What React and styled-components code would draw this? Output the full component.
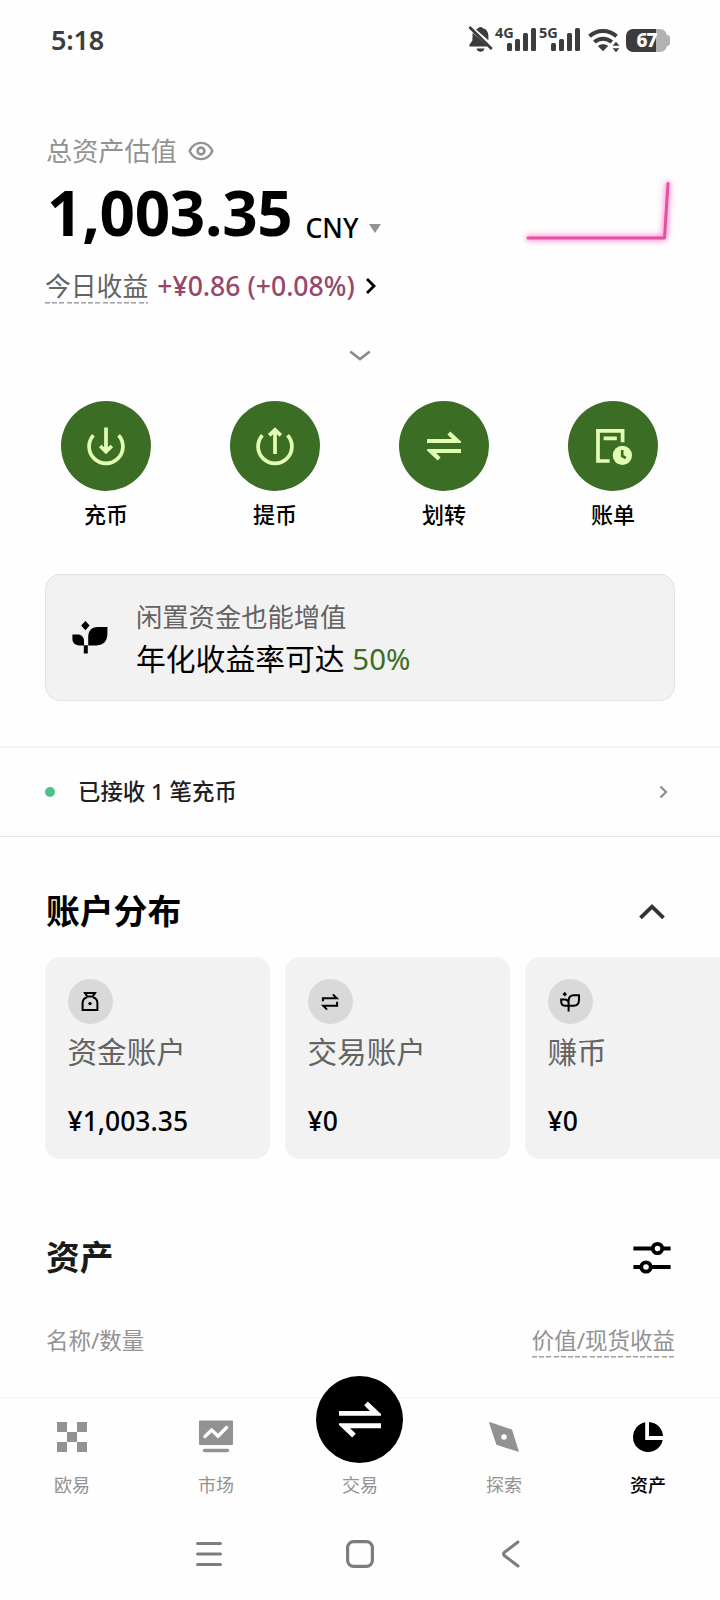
import React from 'react';
import styled, { createGlobalStyle } from 'styled-components';

const GlobalStyle = createGlobalStyle`
* { box-sizing: border-box; }
body {
  margin: 0;
  background: #fefefe;
  color: #000;
  font-family: "Noto Sans", "Noto Sans CJK SC", sans-serif;
}
svg { display: block; flex: none; }
`

const Screen = styled.div`
width: 720px;
height: 1600px;
overflow: hidden;
display: flex;
flex-direction: column;
background: #fefefe;`

/* status bar */

const StatusBar = styled.div`
display: flex;
justify-content: space-between;
align-items: center;
height: 80px;
padding: 0 50px 0 51px;
color: #3c3c3c;`

const Clock = styled.span`
font-size: 27px;
font-weight: 600;
line-height: 40px;
letter-spacing: -0.2px;`

const StatusIcons = styled.div`
display: flex;
align-items: center;
height: 28px;`

const Signal = styled.div`
position: relative;
width: 44px;
height: 28px;`

const SignalType = styled.span`
position: absolute;
left: -1px;
top: -1px;
font-size: 14.5px;
line-height: 14px;
font-weight: 700;`

const Battery = styled.div`
display: flex;
align-items: center;
margin-left: 6px;`

const BatteryBody = styled.div`
display: flex;
align-items: center;
justify-content: center;
width: 41px;
height: 23px;
border-radius: 7px;
background: linear-gradient(90deg, #3c3c3c 30px, #b2b2b2 30px);
color: #fff;
font-size: 19px;
line-height: 23px;
font-weight: 800;
letter-spacing: -1px;`

const BatteryTip = styled.div`
width: 3px;
height: 11px;
border-radius: 0 4px 4px 0;
background: #b2b2b2;`

/* balance */

const Balance = styled.section`
display: flex;
justify-content: space-between;
height: 180px;
margin-top: 54px;
padding: 0 45px;`

const BalanceInfo = styled.div`
display: flex;
flex-direction: column;`

const BalanceLabel = styled.div`
display: flex;
align-items: center;
gap: 11px;
height: 34px;
padding-left: 1px;
color: #929292;
font-size: 26.2px;
line-height: 34px;
font-weight: 400;`

const AmountRow = styled.div`
display: flex;
align-items: baseline;
height: 90px;
padding-left: 2px;
line-height: 88px;`

const Amount = styled.span`
font-size: 62px;
font-weight: 700;
letter-spacing: -0.3px;`

const Currency = styled.span`
margin-left: 13px;
font-size: 26.5px;
font-weight: 500;
transform: translateY(2px);`

const Caret = styled.i`
margin-left: 11px;
border: 6px solid transparent;
border-top: 9px solid #929292;
border-bottom: 0;
transform: translateY(-3px);`

const PnlRow = styled.div`
display: flex;
align-items: center;
height: 56px;
font-size: 25.8px;
line-height: 36px;`

const Dashed = styled.span`
color: ${p => p.color};
background: repeating-linear-gradient(90deg, #a4a4a4 0 5px, transparent 5px 7.2px) bottom / 100% 1.6px no-repeat;
padding-bottom: ${p => p.$pad || 0}px;
margin-bottom: -${p => p.$pad || 0}px;`

const PnlValue = styled.span`
margin: 0 10px 0 9px;
color: #96476a;
font-size: 26.6px;
font-weight: 500;`

const Trend = styled.svg`
margin-top: 36px;
overflow: visible;
filter: drop-shadow(0 0 2px #ff8fd6) drop-shadow(0 0 3px #ff9ddb);`

const Expand = styled.div`
display: flex;
justify-content: center;
align-items: center;
height: 84px;`

/* quick actions */

const Actions = styled.div`
display: flex;
gap: 79px;
margin-top: 3px;
padding-left: 61px;`

const Action = styled.div`
display: flex;
flex-direction: column;
align-items: center;
width: 90px;`

const ActionIcon = styled.div`
display: flex;
align-items: center;
justify-content: center;
width: 90px;
height: 90px;
border-radius: 50%;
background: #3c6d25;`

const ActionLabel = styled.span`
margin-top: 8px;
font-size: 22px;
line-height: 30px;
font-weight: 500;`

/* promo */

const Promo = styled.div`
display: flex;
align-items: center;
height: 127px;
margin: 45px 45px 0;
padding-left: 25px;
border: 1px solid #e2e2e2;
border-radius: 15px;
background: #f2f2f2;`

const PromoText = styled.div`
display: flex;
flex-direction: column;
margin-left: 27px;`

const PromoHint = styled.span`
font-size: 26.3px;
line-height: 42px;
color: #636363;`

const PromoTitle = styled.span`
font-size: 29.8px;
line-height: 42px;

em {
  font-style: normal;
  font-size: 29.4px;
  color: #3c6d25;
}`

/* notice */

const Notice = styled.div`
display: flex;
align-items: center;
height: 91px;
margin-top: 45px;
padding: 0 50px 0 45px;
border-top: 2px solid #f4f4f4;
border-bottom: 1px solid #e4e4e4;
color: #1f1f1f;
font-size: 22.4px;
font-weight: 500;`

const Dot = styled.i`
width: 10px;
height: 10px;
margin-right: 23px;
border-radius: 50%;
background: #4fbf8b;`

const NoticeText = styled.span`
flex: 1;
line-height: 32px;`

/* sections */

const SectionHeader = styled.div`
display: flex;
justify-content: space-between;
align-items: center;
height: 80px;
margin-top: ${p => p.$top}px;
padding: 0 ${p => p.$right}px 0 46px;`

const SectionTitle = styled.h2`
margin: 0;
font-size: 33.8px;
line-height: 48px;
font-weight: 700;
color: ${p => p.color || '#000'};`

const Accounts = styled.div`
display: flex;
gap: 15px;
margin-top: 6px;
padding-left: 45px;`

const Account = styled.div`
display: flex;
flex-direction: column;
flex: none;
width: 225px;
height: 202px;
padding: 22px 0 0 22.5px;
border-radius: 15px;
background: #f2f2f2;`

const AccountIcon = styled.div`
display: flex;
align-items: center;
justify-content: center;
flex: none;
width: 45px;
height: 45px;
border-radius: 50%;
background: #d9d9d9;`

const AccountName = styled.span`
margin-top: 8px;
font-size: 29.6px;
line-height: 40px;
color: #636363;`

const AccountValue = styled.span`
margin-top: 30px;
font-size: 26.5px;
line-height: 38px;
font-weight: 500;`

const Columns = styled.div`
display: flex;
justify-content: space-between;
align-items: center;
height: 40px;
margin-top: 24px;
padding: 0 45px 0 46px;
color: #929292;
font-size: 22.5px;
line-height: 30px;`

/* bottom bars */

const TabBar = styled.nav`
display: flex;
height: 110px;
margin-top: 36px;
border-top: 2px solid #f8f8f8;`

const Tab = styled.div`
position: relative;
display: flex;
flex-direction: column;
align-items: center;
width: 144px;
padding-top: 21px;
color: ${p => (p.$active ? '#000' : '#929292')};`

const TabIcon = styled.div`
display: flex;
align-items: center;
justify-content: center;
height: 34px;`

const TabLabel = styled.span`
margin-top: 17px;
font-size: 18px;
line-height: 28px;
font-weight: ${p => (p.$active ? 500 : 400)};`

const TradeButton = styled.div`
position: absolute;
top: -23px;
left: 28px;
display: flex;
align-items: center;
justify-content: center;
width: 87px;
height: 87px;
border-radius: 50%;
background: #000;`

const SystemNav = styled.div`
display: flex;
justify-content: center;
align-items: center;
gap: 124px;
height: 93px;`

function Bars() {
  return (
    <svg width="44" height="28" fill="#3c3c3c">
      <rect x="11" y="17" width="5" height="8" rx="1.5" />
      <rect x="19" y="13" width="5" height="12" rx="1.5" />
      <rect x="27" y="7" width="5" height="18" rx="1.5" />
      <rect x="35" y="2" width="5" height="23" rx="1.5" />
    </svg>
  )
}

function BellOff() {
  return (
    <svg width="28" height="28" viewBox="0 0 28 28" fill="#3c3c3c">
      <path d="M10 2.300a3 3 0 0 1 5 0c3.600 1 5.400 4 5.400 7.400v4.600L8 3.600zM4.600 6.800 20 20.600H1.400v-1.800l3-4.200zM8.500 22.600h8c-.8 4.300-7.200 4.300-8 0z" />
      <path d="m1.400 1 22.400 22" stroke="#3c3c3c" strokeWidth="2.800" />
    </svg>
  )
}

function Wifi() {
  return (
    <svg width="32" height="28" viewBox="0 0 32 28" fill="none" stroke="#3c3c3c" strokeWidth="4">
      <path d="M1.500 10.300a20 20 0 0 1 27 0M6.400 16a13 13 0 0 1 17.400 0" />
      <path d="m15 25.300-5.200-5.200c3-2.400 7.400-2.400 10.400 0z" fill="#3c3c3c" stroke="none" />
      <path d="m28 15.800 3.400 4h-6.800zm0 10.400 3.400-4h-6.800z" fill="#3c3c3c" stroke="none" />
    </svg>
  )
}

function Eye() {
  return (
    <svg width="26" height="20" viewBox="0 0 26 20" fill="none" stroke="#929292" strokeWidth="2.400">
      <path d="M1.600 10C4 4.900 8 1.900 13 1.900S22 4.900 24.400 10C22 15.100 18 18.100 13 18.100S4 15.100 1.600 10z" />
      <circle cx="13" cy="10" r="3.400" strokeWidth="2.600" />
    </svg>
  )
}

function Transfer({ width, color }) {
  return (
    <svg width={width} viewBox="0 0 34 30" fill={color}>
      <path d="M0 8h25l-4.600-4.600L23.300.4 34 10.500V12H0zM34 22H9l4.600 4.600-2.900 3L0 19.500V18h34z" />
    </svg>
  )
}

function Deposit({ up }) {
  return (
    <svg width="44" height="44" viewBox="0 0 44 44" fill="none" stroke="#e3ffb2" strokeWidth="3.700">
      <path d="M9.400 11.200a16.900 16.900 0 1 0 25.200 0" />
      <path d={up ? 'M22 30V6M16.200 11.400 22 5.800l5.800 5.600' : 'M22 3.400v24M16.200 22 22 27.600l5.800-5.600'} />
    </svg>
  )
}

function Bill() {
  return (
    <svg width="44" height="44" viewBox="0 0 44 44" fill="none" stroke="#e3ffb2" strokeWidth="3.700">
      <path d="M18.600 37H7V6.800h24.600v11.400M12.600 14.400h13.200" />
      <circle cx="31.400" cy="31.400" r="9.600" fill="#e3ffb2" stroke="none" />
      <path d="M31.200 26v6l3.600 2" stroke="#3c6d25" strokeWidth="2.600" />
    </svg>
  )
}

function Sprout() {
  return (
    <svg width="38" height="38" viewBox="0 0 38 38">
      <path d="m14.400 2 4.200 4.600-4.200 4.600-4.200-4.600zM1.400 15.600h5.200c3.800 0 6.400 2.400 6.400 6.600v4.200H8.400c-4.400 0-7-2.400-7-6.800zM17.200 26.400v-8c0-6.400 3.200-10.400 9.600-10.400h9.600v6.600c0 7.600-3.800 11.800-10.800 11.800zM12.800 26.200h4v8.400h-4z" />
    </svg>
  )
}

function MoneyBag() {
  return (
    <svg width="22" height="22" viewBox="0 0 22 22" fill="none" stroke="#000" strokeWidth="2">
      <path d="M6 2h10l-2.200 3.400H8.200zM8 6.200c-3.200.9-4.400 3.200-4.400 6V19h14.800v-6.800c0-2.800-1.200-5.100-4.400-6" />
      <circle cx="11" cy="12.600" r="1.700" fill="#000" stroke="none" />
    </svg>
  )
}

function Swap() {
  return (
    <svg width="20" height="20" viewBox="0 0 22 22" fill="none" stroke="#000" strokeWidth="2.200">
      <path d="M3.200 10.200V6.800h15.200l-4.200-4.200M18.800 10.600v4.600H3.600l4.200 4.200" />
    </svg>
  )
}

function SproutLine() {
  return (
    <svg width="22" height="22" viewBox="0 0 22 22" fill="none" stroke="#000" strokeWidth="2">
      <path d="M9.600 20.400V10c0-4 2-5.800 5.200-5.800H20v4.600c0 4-2 6-5.400 6H6.400c-2.800 0-4.200-1.400-4.200-4.200V8.600h3.200c2.400 0 4.200 1.200 4.200 3.600" />
      <path d="m5.800.8 2.200 2.400-2.200 2.400-2.200-2.400z" fill="#000" stroke="none" />
    </svg>
  )
}

function Sliders() {
  return (
    <svg width="38" height="34" viewBox="0 0 38 34" fill="none" stroke="#000" strokeWidth="3.800">
      <path d="M.4 8.500h19M29 8.500h8.600M.4 27h8.200M18 27h19.600" />
      <circle cx="24.500" cy="8.500" r="4.700" />
      <circle cx="13" cy="27" r="4.700" />
    </svg>
  )
}

const actions = [
  { label: '充币', icon: <Deposit /> },
  { label: '提币', icon: <Deposit up /> },
  { label: '划转', icon: <Transfer width={34} color="#e3ffb2" /> },
  { label: '账单', icon: <Bill /> },
]

const accounts = [
  { name: '资金账户', value: '¥1,003.35', icon: <MoneyBag /> },
  { name: '交易账户', value: '¥0', icon: <Swap /> },
  { name: '赚币', value: '¥0', icon: <SproutLine /> },
]

const tabs = [
  {
    label: '欧易',
    icon: (
      <svg width="30" height="30" fill="#929292">
        <path d="M0 0h10v10H0zM20 0h10v10H20zM10 10h10v10H10zM0 20h10v10H0zM20 20h10v10H20z" />
      </svg>
    ),
  },
  {
    label: '市场',
    icon: (
      <svg width="34" height="34" fill="none" stroke="#929292">
        <rect x="0" y="0.500" width="34" height="24.500" rx="1" fill="#929292" stroke="none" />
        <path d="m6 16.500 6.600-6.400 6.400 6 8.600-8.600" stroke="#fefefe" strokeWidth="3.400" strokeLinecap="round" />
        <path d="M5.500 30.500h23" strokeWidth="3.400" strokeLinecap="round" />
      </svg>
    ),
  },
  { label: '交易', trade: true },
  {
    label: '探索',
    icon: (
      <svg width="30" height="30" viewBox="0 0 30 30" fill="#929292">
        <path d="M.8 0 23 7.600 30 30 7.400 22.800 0 .8zM15 12.200a2.800 2.800 0 1 0 0 5.600 2.800 2.800 0 0 0 0-5.600z" fillRule="evenodd" />
      </svg>
    ),
  },
  {
    label: '资产',
    active: true,
    icon: (
      <svg width="30" height="30" viewBox="0 0 30 30">
        <path d="M12.200.3V18h17.500A15 15 0 1 1 12.200.3zM16 0a15 15 0 0 1 14 14H16z" />
      </svg>
    ),
  },
]

class App extends React.Component {

  render() {
    return (
      <Screen>
        <GlobalStyle />
        <StatusBar>
          <Clock>5:18</Clock>
          <StatusIcons>
            <BellOff />
            <Signal><Bars /><SignalType>4G</SignalType></Signal>
            <Signal><Bars /><SignalType>5G</SignalType></Signal>
            <svg width="4" height="28" />
            <Wifi />
            <Battery>
              <BatteryBody>67</BatteryBody>
              <BatteryTip />
            </Battery>
          </StatusIcons>
        </StatusBar>

        <Balance>
          <BalanceInfo>
            <BalanceLabel>总资产估值 <Eye /></BalanceLabel>
            <AmountRow>
              <Amount>1,003.35</Amount>
              <Currency>CNY</Currency>
              <Caret />
            </AmountRow>
            <PnlRow>
              <Dashed color="#636363">今日收益</Dashed>
              <PnlValue>+¥0.86 (+0.08%)</PnlValue>
              <svg width="12" height="18" fill="none" stroke="#000" strokeWidth="2.800">
                <path d="m2 2 7 7-7 7" />
              </svg>
            </PnlRow>
          </BalanceInfo>
          <Trend width="160" height="80" fill="none">
            <path d="M13 68h136.500l3.500-54.500" stroke="#e2539f" strokeWidth="3" strokeLinecap="round" strokeLinejoin="round" />
          </Trend>
        </Balance>
        <Expand>
          <svg width="22" height="14" fill="none" stroke="#8c8c8c" strokeWidth="2.800">
            <path d="m1.200 2.500 9.800 7.500 9.800-7.500" />
          </svg>
        </Expand>

        <Actions>
          {actions.map(a => (
            <Action key={a.label}>
              <ActionIcon>{a.icon}</ActionIcon>
              <ActionLabel>{a.label}</ActionLabel>
            </Action>
          ))}
        </Actions>

        <Promo>
          <Sprout />
          <PromoText>
            <PromoHint>闲置资金也能增值</PromoHint>
            <PromoTitle>年化收益率可达 <em>50%</em></PromoTitle>
          </PromoText>
        </Promo>

        <Notice>
          <Dot />
          <NoticeText>已接收 1 笔充币</NoticeText>
          <svg width="12" height="16" fill="none" stroke="#8c8c8c" strokeWidth="2.200">
            <path d="m2.500 2.500 5.500 5.500-5.500 5.500" />
          </svg>
        </Notice>

        <SectionHeader $top={34} $right={54}>
          <SectionTitle>账户分布</SectionTitle>
          <svg width="28" height="18" fill="none" stroke="#333" strokeWidth="3.800">
            <path d="M2.500 15.800 14 4.600l11.500 11.200" />
          </svg>
        </SectionHeader>
        <Accounts>
          {accounts.map(a => (
            <Account key={a.name}>
              <AccountIcon>{a.icon}</AccountIcon>
              <AccountName>{a.name}</AccountName>
              <AccountValue>{a.value}</AccountValue>
            </Account>
          ))}
        </Accounts>

        <SectionHeader $top={58} $right={49}>
          <SectionTitle color="#1a1a1a">资产</SectionTitle>
          <Sliders />
        </SectionHeader>
        <Columns>
          <span>名称/数量</span>
          <Dashed $pad={2}>价值/现货收益</Dashed>
        </Columns>

        <TabBar>
          {tabs.map(t => (
            <Tab key={t.label} $active={t.active}>
              {t.trade && (
                <TradeButton><Transfer width={42} color="#fff" /></TradeButton>
              )}
              <TabIcon>{t.icon}</TabIcon>
              <TabLabel $active={t.active}>{t.label}</TabLabel>
            </Tab>
          ))}
        </TabBar>
        <SystemNav>
          <svg width="26" height="28" stroke="#7d7d7d" strokeWidth="3.200" strokeLinecap="round">
            <path d="M1.600 3.500h22.800M1.600 14h22.800M1.600 24.500h22.800" />
          </svg>
          <svg width="28" height="28" fill="none" stroke="#7d7d7d" strokeWidth="3.200">
            <rect x="1.600" y="1.600" width="24.800" height="24.800" rx="6" />
          </svg>
          <svg width="26" height="28" fill="none" stroke="#7d7d7d" strokeWidth="3" strokeLinecap="round" strokeLinejoin="round">
            <path d="M20 2 6.500 12.200q-2 1.800 0 3.600L20 26" />
          </svg>
        </SystemNav>
      </Screen>
    )
  }
}

export default App;
